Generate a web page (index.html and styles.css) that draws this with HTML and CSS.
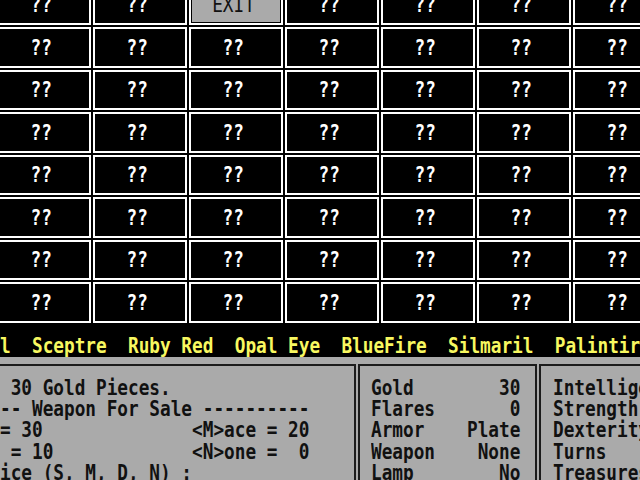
FILE: index.html
```html
<!DOCTYPE html>
<html lang="en">

<head>
    <meta charset="UTF-8">
    <meta name="viewport" content="width=device-width, initial-scale=1.0">
    <title>Wizard's Castle</title>
    <link rel="stylesheet" href="styles.css">
</head>

<body>
    <div class="screen">

        <!-- castle map, one level, 7 x 8 rooms in view -->
        <div class="maze">
            <div class="cell"><span>??</span></div>
            <div class="cell"><span>??</span></div>
            <div class="cell exit"><span>EXIT</span></div>
            <div class="cell"><span>??</span></div>
            <div class="cell"><span>??</span></div>
            <div class="cell"><span>??</span></div>
            <div class="cell"><span>??</span></div>

            <div class="cell"><span>??</span></div>
            <div class="cell"><span>??</span></div>
            <div class="cell"><span>??</span></div>
            <div class="cell"><span>??</span></div>
            <div class="cell"><span>??</span></div>
            <div class="cell"><span>??</span></div>
            <div class="cell"><span>??</span></div>

            <div class="cell"><span>??</span></div>
            <div class="cell"><span>??</span></div>
            <div class="cell"><span>??</span></div>
            <div class="cell"><span>??</span></div>
            <div class="cell"><span>??</span></div>
            <div class="cell"><span>??</span></div>
            <div class="cell"><span>??</span></div>

            <div class="cell"><span>??</span></div>
            <div class="cell"><span>??</span></div>
            <div class="cell"><span>??</span></div>
            <div class="cell"><span>??</span></div>
            <div class="cell"><span>??</span></div>
            <div class="cell"><span>??</span></div>
            <div class="cell"><span>??</span></div>

            <div class="cell"><span>??</span></div>
            <div class="cell"><span>??</span></div>
            <div class="cell"><span>??</span></div>
            <div class="cell"><span>??</span></div>
            <div class="cell"><span>??</span></div>
            <div class="cell"><span>??</span></div>
            <div class="cell"><span>??</span></div>

            <div class="cell"><span>??</span></div>
            <div class="cell"><span>??</span></div>
            <div class="cell"><span>??</span></div>
            <div class="cell"><span>??</span></div>
            <div class="cell"><span>??</span></div>
            <div class="cell"><span>??</span></div>
            <div class="cell"><span>??</span></div>

            <div class="cell"><span>??</span></div>
            <div class="cell"><span>??</span></div>
            <div class="cell"><span>??</span></div>
            <div class="cell"><span>??</span></div>
            <div class="cell"><span>??</span></div>
            <div class="cell"><span>??</span></div>
            <div class="cell"><span>??</span></div>

            <div class="cell"><span>??</span></div>
            <div class="cell"><span>??</span></div>
            <div class="cell"><span>??</span></div>
            <div class="cell"><span>??</span></div>
            <div class="cell"><span>??</span></div>
            <div class="cell"><span>??</span></div>
            <div class="cell"><span>??</span></div>
        </div>

        <!-- treasures found so far -->
        <div class="treasures">
            <div class="txt">l  Sceptre  Ruby Red  Opal Eye  BlueFire  Silmaril  Palintir</div>
        </div>

        <div class="status">
            <div class="panel shop">
                <div class="txt"> 30 Gold Pieces.
-- Weapon For Sale ----------
= 30              &lt;M&gt;ace = 20
 = 10             &lt;N&gt;one =  0
ice (S, M, D, N) :</div>
                <div class="cursor"></div>
            </div>
            <div class="panel gear">
                <div class="txt">Gold        30
Flares       0
Armor    Plate
Weapon    None
Lamp        No</div>
            </div>
            <div class="panel stats">
                <div class="txt">Intelligence
Strength
Dexterity
Turns
Treasures</div>
            </div>
        </div>

    </div>
</body>

</html>
```
FILE: styles.css
```css
body {
    margin: 0;
    padding: 0;
    background-color: #000;
    font-family: "DejaVu Sans Mono", monospace;
    overflow: hidden;
}

.screen {
    width: 640px;
    height: 480px;
    overflow: hidden;
    display: flex;
    flex-direction: column;
}

/* text is drawn on an 8x16 grid scaled up, so squeeze the glyphs */
.txt {
    font-size: 22px;
    font-weight: bold;
    line-height: 21.333px;
    white-space: pre;
    transform: scaleX(0.8055);
    transform-origin: 0 0;
}

.maze {
    flex: none;
    display: grid;
    grid-template-columns: repeat(7, 94px);
    grid-auto-rows: 40.5px;
    gap: 2px;
    margin: -15.5px 0 0 -3px;
}

.cell {
    box-sizing: border-box;
    border: 2px solid #fff;
    background-color: #000;
    color: #fff;
    display: flex;
    align-items: center;
    justify-content: center;
    padding-right: 6px;
}

.cell span {
    font-size: 22px;
    font-weight: bold;
    line-height: 21.333px;
    transform: scaleX(0.8055);
}

.cell.exit {
    background-color: #aaa;
    box-shadow: inset 0 0 0 1px #000;
    color: #111;
}

.cell.exit span {
    font-weight: normal;
}

.treasures {
    flex: none;
    height: 34.5px;
    box-sizing: border-box;
    padding-top: 12.2px;
    color: #f8f860;
}

.status {
    flex: 1;
    display: flex;
    gap: 2px;
    padding-top: 7px;
    margin-left: -10px;
    background-color: #aaa;
    color: #111;
}

.panel {
    flex: none;
    box-sizing: border-box;
    border: 2px solid #1c1c1c;
    border-bottom: none;
    padding-top: 10.7px;
    overflow: hidden;
}

.shop {
    width: 366px;
    padding-left: 8px;
}

.gear {
    width: 179px;
    padding-left: 11px;
}

.stats {
    width: 200px;
    padding-left: 12px;
}

.cursor {
    width: 9px;
    height: 3px;
    margin: -3px 0 0 203px;
    background-color: #555;
}
```
